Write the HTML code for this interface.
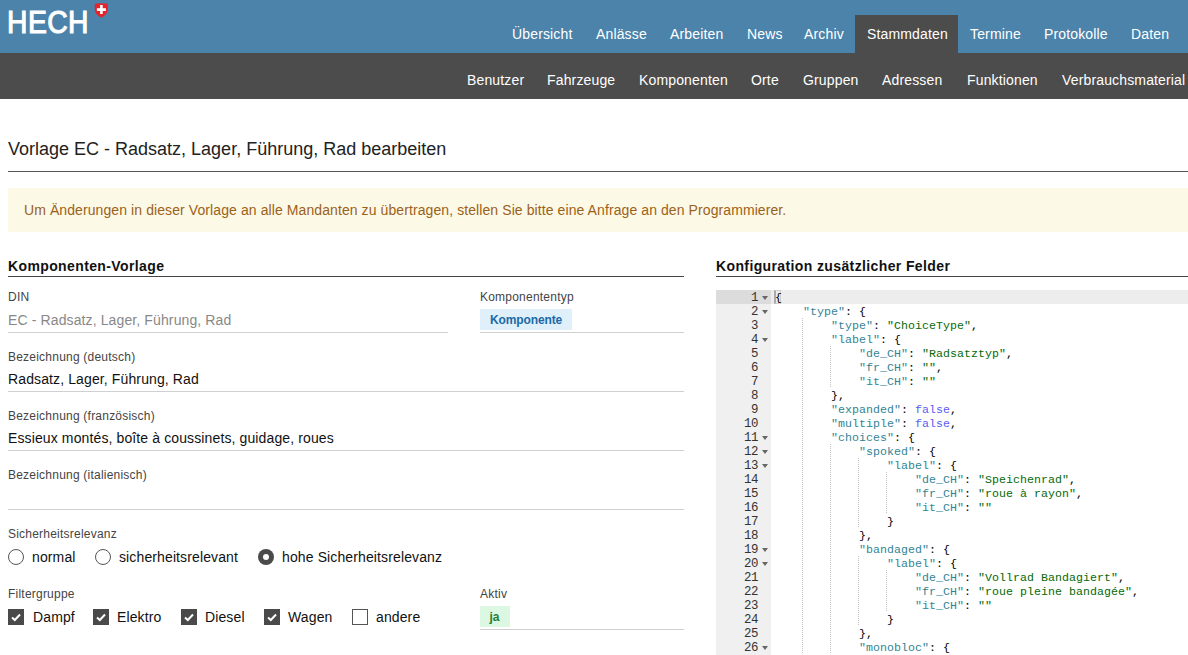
<!DOCTYPE html>
<html><head><meta charset="utf-8">
<style>
*{margin:0;padding:0;box-sizing:border-box}
html,body{width:1188px;height:655px;overflow:hidden;background:#fff}
body{font-family:"Liberation Sans",sans-serif;color:#222;position:relative}
.a{position:absolute;white-space:nowrap;line-height:1}
.hdr{position:absolute;left:0;top:0;width:1188px;height:53px;background:#4b83ab}
.sub{position:absolute;left:0;top:53px;width:1188px;height:46px;background:#4c4c4c}
.nav{font-size:14px;color:#fff;letter-spacing:0.15px}
.tab{position:absolute;left:855px;top:15px;width:103px;height:38px;background:#4c4c4c}
.logo{position:absolute;left:7px;top:6px;font-size:32px;font-weight:normal;color:#fff;-webkit-text-stroke:1.1px #fff;transform:scaleX(0.885);transform-origin:0 0;line-height:1;letter-spacing:0.5px}
.rule{position:absolute;height:1px;background:#555}
.lbl{font-size:12px;color:#444;letter-spacing:0.22px}
.val{font-size:14px;color:#111;letter-spacing:0.12px}
.ul{position:absolute;height:1px;background:#d0d0d0}
.h2{font-size:14px;font-weight:bold;color:#111;letter-spacing:0.38px}
.ed{position:absolute;left:716px;top:290px;width:472px;height:365px;overflow:hidden;font-family:"Liberation Mono",monospace;font-size:12px;color:#000}
.ed div{position:absolute}
.gut{left:0;top:0;width:55px;height:365px;background:#f0f0f0}
.gact{left:0;top:0;width:55px;height:14px;background:#dcdcdc}
.lact{left:55px;top:0;width:417px;height:14px;background:#ededed}
.brk{left:58px;top:0;width:6.5px;height:14px;border:1px solid #cfcfcf;border-left:2px solid #aaa}
.gn{left:0;width:42.1px;height:14px;line-height:17.8px;font-size:12.4px;text-align:right;color:#333;white-space:pre;letter-spacing:-0.45px}
.fd{left:46px;width:6px;height:4px;background:#666;clip-path:polygon(0 0,100% 0,50% 100%)}
.ig{width:1px;height:14px;background:repeating-linear-gradient(to bottom,#c4c4c4 0,#c4c4c4 1px,transparent 1px,transparent 2px)}
.ln{height:14px;line-height:16px;font-size:11.6px;white-space:pre;letter-spacing:0.04px}
.k{color:#318495}.s{color:#036a07}.c{color:#585cf6}
.rad{position:absolute;width:16px;height:16px;border:1px solid #555;border-radius:50%}
.rad.on{border:none;background:#4a4a4a}
.rad.on::after{content:"";position:absolute;left:5px;top:5px;width:6px;height:6px;border-radius:50%;background:#fff}
.cb{position:absolute;width:16px;height:16px;background:#4a4a4a}
.cb.off{background:#fff;border:1px solid #555}
</style></head><body>
<div class="hdr"></div>
<div class="sub"></div>
<div class="tab"></div>
<div class="logo">HECH</div>
<svg style="position:absolute;left:94px;top:3px" width="15" height="15" viewBox="0 0 15 15">
<path d="M0.8 0.8 Q7.2 -0.3 13.8 0.8 L13.8 6.5 Q13.8 11.2 7.3 14.8 Q0.8 11.2 0.8 6.5 Z" fill="#e8212b"/>
<rect x="6.1" y="2" width="2.6" height="9" fill="#fff"/><rect x="2.9" y="5.2" width="9" height="2.8" fill="#fff"/>
</svg>
<!-- top nav -->
<div class="a nav" style="left:512px;top:27px">Übersicht</div>
<div class="a nav" style="left:596px;top:27px">Anlässe</div>
<div class="a nav" style="left:670px;top:27px">Arbeiten</div>
<div class="a nav" style="left:747px;top:27px">News</div>
<div class="a nav" style="left:804px;top:27px">Archiv</div>
<div class="a nav" style="left:867px;top:27px">Stammdaten</div>
<div class="a nav" style="left:970px;top:27px">Termine</div>
<div class="a nav" style="left:1044px;top:27px">Protokolle</div>
<div class="a nav" style="left:1131px;top:27px">Daten</div>
<!-- sub nav -->
<div class="a nav" style="left:467px;top:73px">Benutzer</div>
<div class="a nav" style="left:547px;top:73px">Fahrzeuge</div>
<div class="a nav" style="left:639px;top:73px">Komponenten</div>
<div class="a nav" style="left:751px;top:73px">Orte</div>
<div class="a nav" style="left:803px;top:73px">Gruppen</div>
<div class="a nav" style="left:882px;top:73px">Adressen</div>
<div class="a nav" style="left:967px;top:73px">Funktionen</div>
<div class="a nav" style="left:1062px;top:73px">Verbrauchsmaterial</div>

<!-- title -->
<div class="a" style="left:8px;top:140px;font-size:18px;color:#222">Vorlage EC - Radsatz, Lager, Führung, Rad bearbeiten</div>
<div class="rule" style="left:8px;top:171px;width:1180px;background:#555"></div>

<!-- alert -->
<div style="position:absolute;left:8px;top:188px;width:1180px;height:44px;background:#fdf9e7"></div>
<div class="a" style="left:24px;top:203px;font-size:14px;color:#9c6118;letter-spacing:0.09px">Um Änderungen in dieser Vorlage an alle Mandanten zu übertragen, stellen Sie bitte eine Anfrage an den Programmierer.</div>

<!-- left column -->
<div class="a h2" style="left:8px;top:259px">Komponenten-Vorlage</div>
<div class="rule" style="left:8px;top:276px;width:676px;background:#444"></div>

<div class="a lbl" style="left:8px;top:291px">DIN</div>
<div class="a val" style="left:8px;top:313px;color:#888">EC - Radsatz, Lager, Führung, Rad</div>
<div class="ul" style="left:8px;top:332px;width:440px"></div>

<div class="a lbl" style="left:480px;top:291px">Komponententyp</div>
<div style="position:absolute;left:480px;top:309px;width:92px;height:21px;background:#dff0fb"></div>
<div class="a" style="left:490px;top:314px;font-size:12px;font-weight:bold;color:#1c69a6;letter-spacing:-0.12px">Komponente</div>
<div class="ul" style="left:480px;top:332px;width:204px"></div>

<div class="a lbl" style="left:8px;top:351px">Bezeichnung (deutsch)</div>
<div class="a val" style="left:8px;top:372px">Radsatz, Lager, Führung, Rad</div>
<div class="ul" style="left:8px;top:391px;width:676px"></div>

<div class="a lbl" style="left:8px;top:410px">Bezeichnung (französisch)</div>
<div class="a val" style="left:8px;top:431px">Essieux montés, boîte à coussinets, guidage, roues</div>
<div class="ul" style="left:8px;top:450px;width:676px"></div>

<div class="a lbl" style="left:8px;top:469px">Bezeichnung (italienisch)</div>
<div class="ul" style="left:8px;top:509px;width:676px"></div>

<div class="a lbl" style="left:8px;top:528px">Sicherheitsrelevanz</div>

<div class="a lbl" style="left:8px;top:588px">Filtergruppe</div>

<div class="rad" style="left:8px;top:549px"></div><div class="a val" style="left:32px;top:550px">normal</div>
<div class="rad" style="left:95px;top:549px"></div><div class="a val" style="left:119px;top:550px">sicherheitsrelevant</div>
<div class="rad on" style="left:258px;top:549px"></div><div class="a val" style="left:282px;top:550px">hohe Sicherheitsrelevanz</div>
<div class="cb" style="left:8px;top:609px"><svg width="16" height="16"><path d="M4 8.5 L6.8 11 L12 5.5" stroke="#fff" stroke-width="2" fill="none"/></svg></div><div class="a val" style="left:33px;top:610px">Dampf</div>
<div class="cb" style="left:93px;top:609px"><svg width="16" height="16"><path d="M4 8.5 L6.8 11 L12 5.5" stroke="#fff" stroke-width="2" fill="none"/></svg></div><div class="a val" style="left:117px;top:610px">Elektro</div>
<div class="cb" style="left:181px;top:609px"><svg width="16" height="16"><path d="M4 8.5 L6.8 11 L12 5.5" stroke="#fff" stroke-width="2" fill="none"/></svg></div><div class="a val" style="left:205px;top:610px">Diesel</div>
<div class="cb" style="left:264px;top:609px"><svg width="16" height="16"><path d="M4 8.5 L6.8 11 L12 5.5" stroke="#fff" stroke-width="2" fill="none"/></svg></div><div class="a val" style="left:288px;top:610px">Wagen</div>
<div class="cb off" style="left:352px;top:609px"></div><div class="a val" style="left:376px;top:610px">andere</div>
<div class="a lbl" style="left:480px;top:588px">Aktiv</div>
<div style="position:absolute;left:480px;top:606px;width:30px;height:21px;background:#dcf7e2"></div>
<div class="a" style="left:489.5px;top:611px;font-size:12px;font-weight:bold;color:#237d36">ja</div>
<div class="ul" style="left:480px;top:629px;width:204px"></div>

<!-- right column -->
<div class="a h2" style="left:716px;top:259px">Konfiguration zusätzlicher Felder</div>
<div class="rule" style="left:716px;top:276px;width:472px;background:#444"></div>

<div class="ed">
<div class="gut"></div><div class="gact"></div><div class="lact"></div><div class="brk"></div>
<div class="gn" style="top:0px">1</div>
<div class="fd" style="top:6px"></div>
<div class="ln" style="top:0px;left:59px">{</div>
<div class="gn" style="top:14px">2</div>
<div class="fd" style="top:20px"></div>
<div class="ln" style="top:14px;left:87px"><span class="k">"type"</span>: {</div>
<div class="gn" style="top:28px">3</div>
<div class="ig" style="top:28px;left:86px"></div>
<div class="ln" style="top:28px;left:115px"><span class="k">"type"</span>: <span class="s">"ChoiceType"</span>,</div>
<div class="gn" style="top:42px">4</div>
<div class="fd" style="top:48px"></div>
<div class="ig" style="top:42px;left:86px"></div>
<div class="ln" style="top:42px;left:115px"><span class="k">"label"</span>: {</div>
<div class="gn" style="top:56px">5</div>
<div class="ig" style="top:56px;left:86px"></div>
<div class="ig" style="top:56px;left:114px"></div>
<div class="ln" style="top:56px;left:143px"><span class="k">"de_CH"</span>: <span class="s">"Radsatztyp"</span>,</div>
<div class="gn" style="top:70px">6</div>
<div class="ig" style="top:70px;left:86px"></div>
<div class="ig" style="top:70px;left:114px"></div>
<div class="ln" style="top:70px;left:143px"><span class="k">"fr_CH"</span>: <span class="s">""</span>,</div>
<div class="gn" style="top:84px">7</div>
<div class="ig" style="top:84px;left:86px"></div>
<div class="ig" style="top:84px;left:114px"></div>
<div class="ln" style="top:84px;left:143px"><span class="k">"it_CH"</span>: <span class="s">""</span></div>
<div class="gn" style="top:98px">8</div>
<div class="ig" style="top:98px;left:86px"></div>
<div class="ln" style="top:98px;left:115px">},</div>
<div class="gn" style="top:112px">9</div>
<div class="ig" style="top:112px;left:86px"></div>
<div class="ln" style="top:112px;left:115px"><span class="k">"expanded"</span>: <span class="c">false</span>,</div>
<div class="gn" style="top:126px">10</div>
<div class="ig" style="top:126px;left:86px"></div>
<div class="ln" style="top:126px;left:115px"><span class="k">"multiple"</span>: <span class="c">false</span>,</div>
<div class="gn" style="top:140px">11</div>
<div class="fd" style="top:146px"></div>
<div class="ig" style="top:140px;left:86px"></div>
<div class="ln" style="top:140px;left:115px"><span class="k">"choices"</span>: {</div>
<div class="gn" style="top:154px">12</div>
<div class="fd" style="top:160px"></div>
<div class="ig" style="top:154px;left:86px"></div>
<div class="ig" style="top:154px;left:114px"></div>
<div class="ln" style="top:154px;left:143px"><span class="k">"spoked"</span>: {</div>
<div class="gn" style="top:168px">13</div>
<div class="fd" style="top:174px"></div>
<div class="ig" style="top:168px;left:86px"></div>
<div class="ig" style="top:168px;left:114px"></div>
<div class="ig" style="top:168px;left:142px"></div>
<div class="ln" style="top:168px;left:171px"><span class="k">"label"</span>: {</div>
<div class="gn" style="top:182px">14</div>
<div class="ig" style="top:182px;left:86px"></div>
<div class="ig" style="top:182px;left:114px"></div>
<div class="ig" style="top:182px;left:142px"></div>
<div class="ig" style="top:182px;left:170px"></div>
<div class="ln" style="top:182px;left:199px"><span class="k">"de_CH"</span>: <span class="s">"Speichenrad"</span>,</div>
<div class="gn" style="top:196px">15</div>
<div class="ig" style="top:196px;left:86px"></div>
<div class="ig" style="top:196px;left:114px"></div>
<div class="ig" style="top:196px;left:142px"></div>
<div class="ig" style="top:196px;left:170px"></div>
<div class="ln" style="top:196px;left:199px"><span class="k">"fr_CH"</span>: <span class="s">"roue à rayon"</span>,</div>
<div class="gn" style="top:210px">16</div>
<div class="ig" style="top:210px;left:86px"></div>
<div class="ig" style="top:210px;left:114px"></div>
<div class="ig" style="top:210px;left:142px"></div>
<div class="ig" style="top:210px;left:170px"></div>
<div class="ln" style="top:210px;left:199px"><span class="k">"it_CH"</span>: <span class="s">""</span></div>
<div class="gn" style="top:224px">17</div>
<div class="ig" style="top:224px;left:86px"></div>
<div class="ig" style="top:224px;left:114px"></div>
<div class="ig" style="top:224px;left:142px"></div>
<div class="ln" style="top:224px;left:171px">}</div>
<div class="gn" style="top:238px">18</div>
<div class="ig" style="top:238px;left:86px"></div>
<div class="ig" style="top:238px;left:114px"></div>
<div class="ln" style="top:238px;left:143px">},</div>
<div class="gn" style="top:252px">19</div>
<div class="fd" style="top:258px"></div>
<div class="ig" style="top:252px;left:86px"></div>
<div class="ig" style="top:252px;left:114px"></div>
<div class="ln" style="top:252px;left:143px"><span class="k">"bandaged"</span>: {</div>
<div class="gn" style="top:266px">20</div>
<div class="fd" style="top:272px"></div>
<div class="ig" style="top:266px;left:86px"></div>
<div class="ig" style="top:266px;left:114px"></div>
<div class="ig" style="top:266px;left:142px"></div>
<div class="ln" style="top:266px;left:171px"><span class="k">"label"</span>: {</div>
<div class="gn" style="top:280px">21</div>
<div class="ig" style="top:280px;left:86px"></div>
<div class="ig" style="top:280px;left:114px"></div>
<div class="ig" style="top:280px;left:142px"></div>
<div class="ig" style="top:280px;left:170px"></div>
<div class="ln" style="top:280px;left:199px"><span class="k">"de_CH"</span>: <span class="s">"Vollrad Bandagiert"</span>,</div>
<div class="gn" style="top:294px">22</div>
<div class="ig" style="top:294px;left:86px"></div>
<div class="ig" style="top:294px;left:114px"></div>
<div class="ig" style="top:294px;left:142px"></div>
<div class="ig" style="top:294px;left:170px"></div>
<div class="ln" style="top:294px;left:199px"><span class="k">"fr_CH"</span>: <span class="s">"roue pleine bandagée"</span>,</div>
<div class="gn" style="top:308px">23</div>
<div class="ig" style="top:308px;left:86px"></div>
<div class="ig" style="top:308px;left:114px"></div>
<div class="ig" style="top:308px;left:142px"></div>
<div class="ig" style="top:308px;left:170px"></div>
<div class="ln" style="top:308px;left:199px"><span class="k">"it_CH"</span>: <span class="s">""</span></div>
<div class="gn" style="top:322px">24</div>
<div class="ig" style="top:322px;left:86px"></div>
<div class="ig" style="top:322px;left:114px"></div>
<div class="ig" style="top:322px;left:142px"></div>
<div class="ln" style="top:322px;left:171px">}</div>
<div class="gn" style="top:336px">25</div>
<div class="ig" style="top:336px;left:86px"></div>
<div class="ig" style="top:336px;left:114px"></div>
<div class="ln" style="top:336px;left:143px">},</div>
<div class="gn" style="top:350px">26</div>
<div class="fd" style="top:356px"></div>
<div class="ig" style="top:350px;left:86px"></div>
<div class="ig" style="top:350px;left:114px"></div>
<div class="ln" style="top:350px;left:143px"><span class="k">"monobloc"</span>: {</div>
</div>
</body></html>
